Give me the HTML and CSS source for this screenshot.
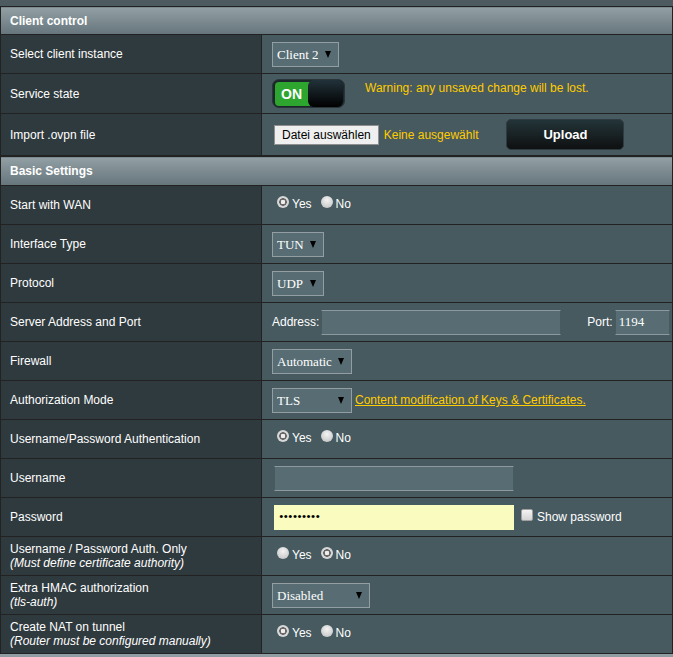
FILE: index.html
```html
<!DOCTYPE html>
<html>
<head>
<meta charset="utf-8">
<link rel="stylesheet" href="styles.css">
</head>
<body>
<div class="topbar"></div>
<table class="form">
  <colgroup><col class="c1"><col></colgroup>
  <thead><tr class="h1"><td colspan="2">Client control</td></tr></thead>
  <tbody>
    <tr class="ra">
      <th>Select client instance</th>
      <td><span class="sel w67"><select><option>Client 2</option></select></span></td>
    </tr>
    <tr class="rb">
      <th>Service state</th>
      <td>
        <div class="line">
          <div class="switch"><span class="on">ON</span><span class="knob"></span></div>
          <span class="warn">Warning: any unsaved change will be lost.</span>
        </div>
      </td>
    </tr>
    <tr class="rc">
      <th>Import .ovpn file</th>
      <td>
        <div class="line mid">
          <button class="filebtn">Datei auswählen</button>
          <span class="nofile">Keine ausgewählt</span>
          <button class="upload">Upload</button>
        </div>
      </td>
    </tr>
  </tbody>
</table>
<table class="form">
  <colgroup><col class="c1"><col></colgroup>
  <thead><tr class="h2"><td colspan="2">Basic Settings</td></tr></thead>
  <tbody>
    <tr>
      <th>Start with WAN</th>
      <td><label class="rad"><input type="radio" name="wan" checked>Yes</label><label class="rad"><input type="radio" name="wan">No</label></td>
    </tr>
    <tr>
      <th>Interface Type</th>
      <td><span class="sel w52"><select><option>TUN</option></select></span></td>
    </tr>
    <tr>
      <th>Protocol</th>
      <td><span class="sel w52"><select><option>UDP</option></select></span></td>
    </tr>
    <tr>
      <th>Server Address and Port</th>
      <td>
        <div class="line mid">
          <span class="lbl">Address:</span><input class="txt addr" type="text" value="">
          <span class="lbl port">Port:</span><input class="txt portin" type="text" value="1194">
        </div>
      </td>
    </tr>
    <tr>
      <th>Firewall</th>
      <td><span class="sel w80"><select><option>Automatic</option></select></span></td>
    </tr>
    <tr>
      <th>Authorization Mode</th>
      <td><div class="line mid"><span class="sel w80"><select><option>TLS</option></select></span><a class="link" href="#">Content modification of Keys &amp; Certificates.</a></div></td>
    </tr>
    <tr>
      <th>Username/Password Authentication</th>
      <td><label class="rad"><input type="radio" name="upa" checked>Yes</label><label class="rad"><input type="radio" name="upa">No</label></td>
    </tr>
    <tr>
      <th>Username</th>
      <td><input class="txt user" type="text" value=""></td>
    </tr>
    <tr>
      <th>Password</th>
      <td><div class="line mid"><input class="txt pass" type="password" value="secret123"><label class="chk"><input type="checkbox">Show password</label></div></td>
    </tr>
    <tr>
      <th>Username / Password Auth. Only<span class="sub">(Must define certificate authority)</span></th>
      <td><label class="rad"><input type="radio" name="upo">Yes</label><label class="rad"><input type="radio" name="upo" checked>No</label></td>
    </tr>
    <tr>
      <th>Extra HMAC authorization<span class="sub">(tls-auth)</span></th>
      <td><span class="sel w98"><select><option>Disabled</option></select></span></td>
    </tr>
    <tr>
      <th>Create NAT on tunnel<span class="sub">(Router must be configured manually)</span></th>
      <td><label class="rad"><input type="radio" name="nat" checked>Yes</label><label class="rad"><input type="radio" name="nat">No</label></td>
    </tr>
  </tbody>
</table>
<div class="nextbar"></div>
</body>
</html>
```
FILE: styles.css
```css
html, body {
  margin: 0;
  padding: 0;
}
body {
  background: #4d5a5f;
  font-family: "Liberation Sans", Arial, sans-serif;
  font-size: 12px;
  color: #fff;
  width: 673px;
  overflow: hidden;
}
.topbar {
  height: 6px;
  background: #4d5a5f;
}
.nextbar {
  height: 28px;
  background: linear-gradient(#92a0a5 0%, #66757c 100%);
}
.form {
  width: 673px;
  border-collapse: collapse;
  table-layout: fixed;
}
.c1 {
  width: 261px;
}
.form td,
.form th {
  border: 1px solid #222;
}
.form thead td {
  padding: 0 0 0 9px;
  background: linear-gradient(#92a0a5 0%, #66757c 100%);
  font-weight: bold;
  text-align: left;
}
.h1 { height: 28px; }
.h2 { height: 29px; }
.form tbody tr { height: 39px; }
.form tbody tr.ra { height: 39px; }
.form tbody tr.rb { height: 40px; }
.form tbody tr.rc { height: 42px; }
.form th {
  background: #2f3a3e;
  font-weight: normal;
  text-align: left;
  padding: 0 0 0 9px;
  line-height: 14px;
}
.form tbody td {
  background: #475a5f;
  padding: 0 0 0 10px;
}
.sub {
  display: block;
  font-style: italic;
}
.line {
  display: flex;
  align-items: flex-start;
}
.line.mid {
  align-items: center;
}
.sel {
  position: relative;
  display: inline-block;
  vertical-align: middle;
}
.sel select {
  appearance: none;
  -webkit-appearance: none;
  display: block;
  height: 25px;
  margin: 0;
  padding: 0 0 0 4px;
  background: #576d73;
  border: 1px solid #929ea1;
  border-radius: 0;
  color: #fff;
  font-family: "Liberation Serif", "Times New Roman", serif;
  font-size: 13px;
}
.sel::after {
  content: "";
  position: absolute;
  right: 8px;
  top: 9px;
  border-left: 3px solid transparent;
  border-right: 3px solid transparent;
  border-top: 7px solid #000;
  pointer-events: none;
}
.w67 select { width: 67px; }
.w52 select { width: 52px; }
.w80 select { width: 80px; }
.w98 select { width: 98px; }

.switch {
  display: flex;
  width: 73px;
  height: 29px;
  border: 1px solid #2a3539;
  border-radius: 7px;
  background: #1c272b;
  box-sizing: border-box;
  padding: 2px 1px 1px 2px;
  position: relative;
}
.switch .on {
  width: 40px;
  height: 24px;
  background: #2da52f;
  border-radius: 4px 0 0 4px;
  color: #fff;
  font-weight: bold;
  font-size: 14px;
  line-height: 24px;
  padding-left: 6px;
  box-sizing: border-box;
}
.switch .knob {
  position: absolute;
  right: 1px;
  top: 0;
  width: 35px;
  height: 27px;
  border-radius: 6px;
  background: linear-gradient(#22323a 0%, #000 100%);
}
.warn {
  color: #ffcc00;
  margin-left: 20px;
  margin-top: 2px;
}
.filebtn {
  height: 20px;
  margin: 0 0 0 2px;
  padding: 0 7px;
  border: 1px solid #8f8f8f;
  border-radius: 0;
  background: #efefef;
  color: #000;
  font-family: "Liberation Sans", Arial, sans-serif;
  font-size: 12px;
}
.nofile {
  color: #ffcc00;
  margin-left: 5px;
}
.upload {
  width: 118px;
  height: 31px;
  margin-left: 28px;
  border: 1px solid #2e3b40;
  border-radius: 5px;
  background: linear-gradient(#233438 0%, #0f1011 100%);
  color: #fff;
  font-family: "Liberation Sans", Arial, sans-serif;
  font-size: 13px;
  font-weight: bold;
}
.rad {
  display: inline-flex;
  align-items: center;
  margin-right: 4px;
}
.rad input,
.chk input {
  appearance: none;
  -webkit-appearance: none;
  margin: 0 3px 0 5px;
}
.rad input {
  width: 12px;
  height: 12px;
  border-radius: 50%;
  background: radial-gradient(circle at 50% 35%, #f4f4f4 0%, #c8c8c8 80%);
  position: relative;
  top: -2px;
}
.rad input:checked {
  background: radial-gradient(circle, #eeeeee 0 2px, #6a6a6a 2.5px 3.6px, #d7d7d7 4px);
}
.chk {
  display: inline-flex;
  align-items: center;
  margin-left: 7px;
}
.chk input {
  width: 12px;
  height: 12px;
  margin: 0 4px 0 0;
  border: 1px solid #a0a0a0;
  border-radius: 2px;
  background: linear-gradient(#f4f4f4, #d4d4d4);
  box-sizing: border-box;
  position: relative;
  top: -2px;
}
.lbl {
  color: #fff;
}
.txt {
  box-sizing: border-box;
  height: 25px;
  margin: 0 0 0 2px;
  padding: 0 0 0 3px;
  background: #576d73;
  border: 1px solid #475a5f;
  border-top-color: #8c9a9f;
  border-bottom-color: #8c9a9f;
  border-radius: 0;
  color: #fff;
  font-family: "Liberation Serif", "Times New Roman", serif;
  font-size: 13px;
  outline: none;
}
.addr { width: 240px; }
.port { margin-left: 26px; }
.portin { width: 55px; }
.user { width: 240px; }
.pass {
  width: 240px;
  background: #fafcbf;
  border-color: #fafcbf;
  color: #000;
  padding-left: 4px;
}
.link {
  color: #ffcc00;
  text-decoration: underline;
  margin-left: 3px;
}
```
